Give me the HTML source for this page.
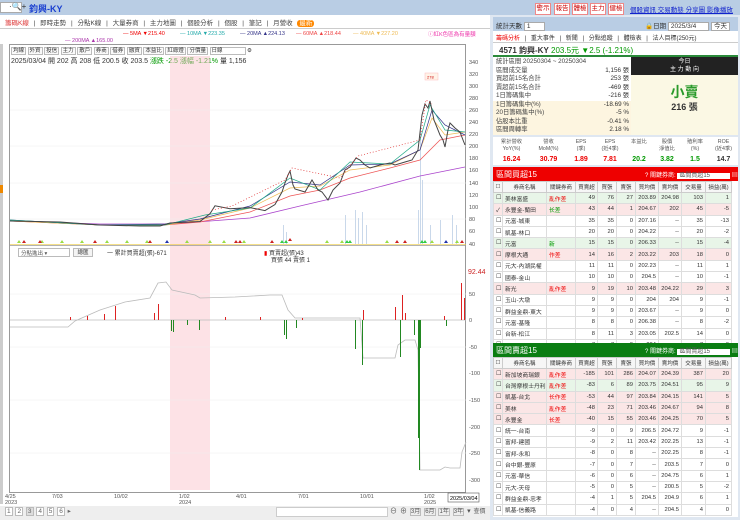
<!DOCTYPE html>
<html><head><meta charset="utf-8"><style>
*{box-sizing:border-box;margin:0;padding:0}
body{width:740px;height:520px;overflow:hidden;background:#fff;font-family:"Liberation Sans","Noto Sans CJK TC",sans-serif;font-size:7px;color:#333;position:relative}
.a{position:absolute;white-space:nowrap}
.btn{position:absolute;border:1px solid #bbb;background:#f4f4f4;font-size:6.5px;line-height:10px;text-align:center}
table{border-collapse:collapse;font-size:5.8px;table-layout:fixed}
td{border:1px solid #ddd;padding:0 2px;height:11.3px;text-align:right;white-space:nowrap;overflow:hidden}
th{border:1px solid #ccc;font-weight:normal;height:11px;background:#f6f6f6;white-space:nowrap;overflow:hidden;font-size:5.5px}
.pk td{background:#fbe6e6}.gn td{background:#e8f5e8}
.r{color:#e00}.g{color:#090}
.tb{border:1px solid #bbb;padding:0 1px;background:#fafafa}
</style></head><body>
<div class="a" style="left:0;top:0;width:740px;height:15px;background:#b9cde4"></div>
<div class="a" style="left:0;top:2px;width:22px;height:11px;background:#fff;border:1px solid #aaa"></div>
<div class="a" style="left:9px;top:2px;font-size:8px">·🔍+</div>
<div class="a" style="left:29px;top:2px;font-size:9px;font-weight:bold;color:#1a3fd0">鈞興-KY</div>
<div class="btn" style="left:535px;top:3px;width:16px;border-color:#e88;background:#fff;color:#c00">警示</div>
<div class="btn" style="left:554px;top:3px;width:16px;border-color:#e88;background:#fff;color:#c00">報告</div>
<div class="btn" style="left:572px;top:3px;width:16px;border-color:#e88;background:#fff;color:#c00">體檢</div>
<div class="btn" style="left:590px;top:3px;width:16px;border-color:#e88;background:#fff;color:#c00">主力</div>
<div class="btn" style="left:608px;top:3px;width:16px;border-color:#e88;background:#fff;color:#c00">健檢</div>
<div class="a" style="left:630px;top:4px;color:#12c;text-decoration:underline;font-size:6.5px">個股資訊 交易動態 分享圖 影像播放</div>
<div class="a" style="left:0;top:15px;width:490px;height:14px;background:#fff;border-bottom:1px solid #ccc"></div>
<div class="a" style="left:5px;top:17px;font-size:6.5px;color:#444;word-spacing:3px"><span style="color:#d33">籌碼K線</span> | 即時走勢 | 分點K線 | 大量券商 | 主力地圖 | 個股分析 | 個股 | 筆記 | 月營收 <span style="background:#f80;color:#fff;border-radius:3px;padding:0 2px">最新</span></div>
<div class="a" style="left:123px;top:31px;font-size:5.5px" ><span class="r">— 5MA ▼215.40</span></div>
<div class="a" style="left:180px;top:31px;font-size:5.5px;color:#2aa">— 10MA ▼223.35</div>
<div class="a" style="left:240px;top:31px;font-size:5.5px;color:#338">— 20MA ▲224.13</div>
<div class="a" style="left:296px;top:31px;font-size:5.5px;color:#e44">— 60MA ▲218.44</div>
<div class="a" style="left:353px;top:31px;font-size:5.5px;color:#eb5">— 40MA ▼227.20</div>
<div class="a" style="left:65px;top:38px;font-size:5.5px;color:#a3a">— 200MA ▲165.00</div>
<div class="a" style="left:428px;top:30px;font-size:5.5px;color:#e3a">ⓘ紅K色區為有量額</div>
<div class="a" style="left:9px;top:44px;width:457px;height:449px;border:1px solid #999"></div>
<div class="a" style="left:0;top:44px;width:3px;height:460px;background:#ccc"></div>
<div class="a" style="left:0;top:185px;width:3px;height:8px;background:#e80"></div>
<div class="a" style="left:11px;top:46px;font-size:5.5px;word-spacing:0">
<span class="tb">均線</span> <span class="tb">外資</span> <span class="tb">投信</span> <span class="tb">主力</span> <span class="tb">散戶</span> <span class="tb">券商</span> <span class="tb">借券</span> <span class="tb">融資</span> <span class="tb">本益比</span> <span class="tb">紅綠燈</span> <span class="tb">分價量</span> <span class="tb" style="padding-right:22px;background:#fff">日線</span> ⚙</div>
<div class="a" style="left:11px;top:56px;font-size:7px">2025/03/04 開 202 高 208 低 200.5 收 203.5 <span class="g">漲跌 -2.5 漲幅 -1.21%</span> 量 1,156</div>
<div class="a" style="left:170px;top:56px;width:40px;height:434px;background:rgba(250,190,200,.45)"></div>
<svg class="a" style="left:0;top:0" width="490" height="520">
<g stroke="#eee" stroke-width="0.5">
<line x1="10" y1="110" x2="466" y2="110"/><line x1="10" y1="146" x2="466" y2="146"/><line x1="10" y1="183" x2="466" y2="183"/><line x1="10" y1="219" x2="466" y2="219"/>
<line x1="10" y1="294" x2="466" y2="294"/><line x1="10" y1="347" x2="466" y2="347"/><line x1="10" y1="400" x2="466" y2="400"/><line x1="10" y1="453" x2="466" y2="453"/></g>
<g fill="#c9d8ea">
<rect x="283" y="225" width="1" height="19"/><rect x="286" y="232" width="1" height="12"/><rect x="345" y="215" width="1" height="29"/><rect x="355" y="210" width="1" height="34"/><rect x="358" y="218" width="1" height="26"/><rect x="362" y="212" width="1" height="32"/><rect x="366" y="225" width="1" height="19"/><rect x="418" y="210" width="1" height="34"/><rect x="420" y="128" width="1" height="116"/><rect x="422" y="180" width="1" height="64"/><rect x="430" y="225" width="1" height="19"/><rect x="440" y="220" width="1" height="24"/><rect x="452" y="215" width="1" height="29"/><rect x="456" y="225" width="1" height="19"/></g>
<polyline fill="none" stroke="#a4c" stroke-width="0.8" points="10,221 100,224 170,224 250,218 300,206 360,192 420,176 465,167"/>
<polyline fill="none" stroke="#e55" stroke-width="0.7" points="10,221 100,225 165,225 200,222 250,212 290,196 320,190 350,178 390,168 420,160 440,140 465,135"/>
<polyline fill="none" stroke="#eb5" stroke-width="0.7" points="10,221 100,225 165,225 200,220 250,208 290,188 320,186 350,170 390,165 420,150 432,118 445,135 465,132"/>
<polyline fill="none" stroke="#338" stroke-width="0.7" points="10,220 100,225 165,224 200,219 250,206 290,182 320,185 350,165 390,164 420,150 432,110 445,125 455,130 465,135"/>
<polyline fill="none" stroke="#2a8" stroke-width="0.7" points="10,220 100,225 165,225 205,215 250,208 290,178 320,190 350,162 390,164 420,140 430,105 445,130 465,132"/>
<polyline fill="none" stroke="#444" stroke-width="1" points="10,221 60,222 100,225 140,226 160,226 170,223 200,221.5 210,213.6 215,205.8 230,208.8 250,207.6 265,210.6 275,204.5 282,192 285,183 288,175 290,171 293,185 295,189 305,192 312,180 318,190 322,192 328,200 333,190 340,183 345,170 350,167 356,158 360,160 365,165 370,168 380,165 390,163 395,165 405,162 412,160 418,150 422,115 425,104 428,108 430,101 434,120 440,135 443,140 445,147 448,130 450,123 455,128 460,132 463,140 465,145"/>
<polyline fill="none" stroke="#d22" stroke-width="0.7" stroke-dasharray="1 2" points="212,210 232,206 285,180 292,168 340,178 358,156 420,140 426,100 432,104"/>
<g font-size="4" fill="#c00"><rect x="425" y="73" width="13" height="7" fill="#fff3e8" stroke="#fbb" stroke-width="0.5"/><text x="427" y="78.5">278</text></g>
<g fill="#9d4"><path d="M17,243l2,-3l2,3zM40,243l2,-3l2,3zM60,243l2,-3l2,3zM80,243l2,-3l2,3zM105,243l2,-3l2,3zM125,243l2,-3l2,3zM145,243l2,-3l2,3zM185,243l2,-3l2,3zM208,243l2,-3l2,3zM222,243l2,-3l2,3zM242,243l2,-3l2,3zM325,243l2,-3l2,3zM340,243l2,-3l2,3zM385,243l2,-3l2,3zM430,243l2,-3l2,3zM455,243l2,-3l2,3z"/></g>
<g fill="#c22"><path d="M22,243l2,-3l2,3zM38,243l2,-3l2,3zM93,243l2,-3l2,3zM148,243l2,-3l2,3zM234,243l2,-3l2,3zM238,243l2,-3l2,3zM270,243l2,-3l2,3zM288,241l2,-3l2,3zM395,243l2,-3l2,3zM403,243l2,-3l2,3zM460,243l2,-3l2,3z"/></g>
<g fill="#3c4"><path d="M280,243l2,-3l2,3zM284,243l2,-3l2,3zM345,243l2,-3l2,3zM348,243l2,-3l2,3zM420,243l2,-3l2,3zM423,243l2,-3l2,3z"/></g>
<g fill="#23a"><path d="M165,243l2,-3l2,3zM444,243l2,-3l2,3z"/></g>
<line x1="10" y1="245.5" x2="466" y2="245.5" stroke="#999" stroke-width="0.7"/>
<line x1="10" y1="244.3" x2="466" y2="244.3" stroke="#ec4" stroke-width="0.6"/>
<line x1="10" y1="320" x2="466" y2="320" stroke="#bbb" stroke-width="0.7"/>
<polyline fill="none" stroke="#bbb" stroke-width="0.8" points="10,327 68,327 75,321 100,310 125,302 150,298 158,283 166,282 172,290 195,295 200,298 235,297 270,295 282,295 288,310 295,318 360,318 363,358 395,358 398,345 405,340 415,340 418,350 420,470 440,470 445,467 450,468 460,468 462,452 466,442"/>
<g fill="#d22"><rect x="70" y="317" width="1" height="3"/><rect x="87" y="316" width="1" height="4"/><rect x="104" y="314" width="1" height="6"/><rect x="115" y="306" width="1" height="14"/><rect x="158" y="304" width="1" height="16"/><rect x="154" y="313" width="1" height="7"/><rect x="225" y="317" width="1" height="3"/><rect x="260" y="317" width="1" height="3"/><rect x="302" y="318" width="1" height="2"/><rect x="363" y="310" width="1" height="10"/><rect x="395" y="307" width="1" height="13"/><rect x="402" y="295" width="1" height="25"/><rect x="405" y="313" width="1" height="7"/><rect x="444" y="316" width="1" height="4"/><rect x="461" y="283" width="1" height="37"/><rect x="464" y="298" width="1" height="22"/></g>
<g fill="#282"><rect x="171" y="320" width="1" height="11"/><rect x="173" y="320" width="1" height="12"/><rect x="187" y="320" width="1" height="5"/><rect x="199" y="320" width="1" height="10"/><rect x="284" y="320" width="1" height="15"/><rect x="286" y="320" width="1" height="19"/><rect x="296" y="320" width="1" height="8"/><rect x="355" y="320" width="1" height="29"/><rect x="362" y="320" width="1" height="45"/><rect x="400" y="320" width="1" height="37"/><rect x="414" y="320" width="1" height="15"/><rect x="418" y="320" width="1" height="118"/><rect x="419" y="320" width="1" height="150"/><rect x="420" y="320" width="1" height="28"/><rect x="446" y="320" width="1" height="6"/></g>
<g font-size="5.5" fill="#555">
<text x="469" y="64">340</text><text x="469" y="76">320</text><text x="469" y="88">300</text><text x="469" y="100">280</text><text x="469" y="112">260</text><text x="469" y="124">240</text><text x="469" y="136">220</text><text x="469" y="148">200</text><text x="469" y="160">180</text><text x="469" y="172">160</text><text x="469" y="185">140</text><text x="469" y="197">120</text><text x="469" y="209">100</text><text x="469" y="221">80</text><text x="469" y="233">60</text><text x="469" y="246">40</text>
<text x="469" y="296">50</text><text x="469" y="322">0</text><text x="469" y="349">-50</text><text x="469" y="375">-100</text><text x="469" y="402">-150</text><text x="469" y="429">-200</text><text x="469" y="455">-250</text><text x="469" y="482">-300</text>
<text x="5" y="498">4/25</text><text x="5" y="504">2023</text><text x="52" y="498">7/03</text><text x="114" y="498">10/02</text><text x="179" y="498">1/02</text><text x="179" y="504">2024</text><text x="236" y="498">4/01</text><text x="298" y="498">7/01</text><text x="360" y="498">10/01</text><text x="424" y="498">1/02</text><text x="424" y="504">2025</text></g>
<text x="468" y="274" font-size="7" fill="#c22">92.44</text>
<rect x="448" y="493" width="31" height="9" fill="#fff" stroke="#555" stroke-width="0.6"/><text x="450" y="500" font-size="5.5">2025/03/04</text>
</svg>
<div class="a" style="left:18px;top:248px;width:52px;height:9px;border:1px solid #bbb;font-size:5.5px;padding-left:2px;color:#555">分點進出 ▾</div>
<div class="btn" style="left:73px;top:248px;width:20px;height:9px;line-height:8px;font-size:5.5px">總匯</div>
<div class="a" style="left:107px;top:248px;font-size:6px">一 累計買賣超(張)-671</div>
<div class="a" style="left:264px;top:248px;font-size:6px"><span class="r">▮</span> 買賣超(張)43</div>
<div class="a" style="left:271px;top:255px;font-size:6px">買張 44 賣張 1</div>
<div class="a" style="left:0;top:506px;width:490px;height:14px;background:#eee"></div>
<div class="a" style="left:5px;top:507px;font-size:6.5px;color:#666;word-spacing:1px">
<span style="border:1px solid #bbb;background:#fff;padding:0 1px">1</span> <span style="border:1px solid #bbb;background:#fff;padding:0 1px">2</span> <span style="border:1px solid #bbb;background:#ddd;padding:0 1px">3</span> <span style="border:1px solid #bbb;background:#fff;padding:0 1px">4</span> <span style="border:1px solid #bbb;background:#fff;padding:0 1px">5</span> <span style="border:1px solid #bbb;background:#fff;padding:0 1px">6</span> ▸</div>
<div class="a" style="left:276px;top:507px;width:112px;height:10px;background:#fff;border:1px solid #ccc"></div>
<div class="a" style="left:390px;top:506px;font-size:7px;color:#555;word-spacing:1px">⊖ ⊕ <span style="border:1px solid #bbb;font-size:6px">3月</span> <span style="border:1px solid #bbb;font-size:6px">6月</span> <span style="border:1px solid #bbb;font-size:6px">1年</span> <span style="border:1px solid #bbb;font-size:6px">3年</span> ▾ <span style="font-size:6px">查價</span></div>

<div class="a" style="left:490px;top:15px;width:250px;height:505px;background:#dfe7f1"></div>
<div class="a" style="left:493px;top:17px;width:245px;height:14px;background:#b9cde4"></div>
<div class="a" style="left:496px;top:20px;font-size:6.5px">統計天數 <span style="background:#fff;border:1px solid #aaa;padding:0 14px 0 2px">1</span></div>
<div class="a" style="left:645px;top:20px;font-size:6.5px">🔒日期 <span style="background:#fff;border:1px solid #aaa;padding:0 12px 0 2px">2025/3/4</span> <span style="background:#fff;border:1px solid #aaa;padding:0 2px">今天</span></div>
<div class="a" style="left:493px;top:31px;width:245px;height:12px;background:#fff;border-bottom:1px solid #ccc;font-size:6px;padding:2px 3px;word-spacing:3px"><span class="r">籌碼分析</span> | 重大事件 | 新聞 | 分點追蹤 | 體檢表 | 法人目標(250元)</div>
<div class="a" style="left:493px;top:43px;width:245px;height:14px;background:#fff;border-bottom:2px solid #2a8a3a;font-size:8px;padding:2px 6px"><b>4571 鈞興-KY</b> <span class="g">203.5元 ▼2.5 (-1.21%)</span></div>
<div class="a" style="left:493px;top:57px;width:138px;height:78px;background:#fff"></div>
<div class="a" style="left:493px;top:101px;width:138px;height:34px;background:#fdf5e0"></div>
<div class="a" style="left:496px;top:58px;font-size:6.3px;line-height:8.5px;color:#444">統計區間 20250304 ~ 20250304<br>區間成交量<br>買超前15名合計<br>賣超前15名合計<br>1日籌碼集中<br>1日籌碼集中(%)<br>20日籌碼集中(%)<br>佔股本比重<br>區間周轉率</div>
<div class="a" style="left:590px;top:66.5px;font-size:6.3px;line-height:8.5px;text-align:right;width:39px;color:#333">1,156 張<br>253 張<br>-469 張<br>-216 張<br>-18.69 %<br>-5 %<br>-0.41 %<br>2.18 %</div>
<div class="a" style="left:631px;top:57px;width:107px;height:18px;background:#222;color:#fff;font-size:6px;text-align:center;line-height:8px;padding-top:1px">今日<br>主 力 動 向</div>
<div class="a" style="left:631px;top:75px;width:107px;height:60px;background:#fbf8e4"></div>
<div class="a" style="left:631px;top:82px;width:107px;text-align:center;font-size:14px;color:#2a9a2a;font-weight:bold">小賣</div>
<div class="a" style="left:631px;top:100px;width:107px;text-align:center;font-size:9px;font-weight:bold">216 張</div>
<div class="a" style="left:493px;top:137px;width:245px;height:28px;background:#fff"></div>
<div class="a" style="left:493px;top:139px;width:245px;font-size:5.3px;color:#555;display:flex;text-align:center;line-height:7px">
<div style="width:37px">累計營收<br>YoY(%)</div><div style="width:37px">營收<br>MoM(%)</div><div style="width:28px">EPS<br>(季)</div><div style="width:30px">EPS<br>(近4季)</div><div style="width:28px">本益比</div><div style="width:28px">股價<br>淨值比</div><div style="width:28px">殖利率<br>(%)</div><div style="width:29px">ROE<br>(近4季)</div></div>
<div class="a" style="left:493px;top:156px;width:245px;font-size:7px;font-weight:bold;display:flex;text-align:center">
<div style="width:37px" class="r">16.24</div><div style="width:37px" class="r">30.79</div><div style="width:28px" class="r">1.89</div><div style="width:30px" class="r">7.81</div><div style="width:28px" class="g">20.2</div><div style="width:28px" class="g">3.82</div><div style="width:28px" class="g">1.5</div><div style="width:29px">14.7</div></div>
<div class="a" style="left:493px;top:167px;width:245px;height:14px;background:#e00;color:#fff;font-size:8px;padding:2px 3px">區間買超15<span style="position:absolute;left:152px;top:3px;font-size:6px">? 關鍵券商: <span style="background:#fff;color:#555;padding:0 20px 0 2px">區間買超15</span> ▤</span></div>
<div class="a" style="left:493px;top:181px;width:245px;height:162px;background:#fff;overflow:hidden">
<table style="width:238px">
<colgroup><col style="width:9px"><col style="width:44px"><col style="width:29px"><col style="width:22px"><col style="width:19px"><col style="width:19px"><col style="width:23px"><col style="width:23px"><col style="width:24px"><col style="width:26px"></colgroup>
<tr><th>☐</th><th>券商名稱</th><th>關鍵券商</th><th>買賣超</th><th>買張</th><th>賣張</th><th>買均價</th><th>賣均價</th><th>交易量</th><th>損益(萬)</th></tr>
<tr class="gn"><td>☐</td><td style="text-align:left">美林富盛</td><td style="text-align:left" class="r">亂作差</td><td>49</td><td>76</td><td>27</td><td>203.89</td><td>204.98</td><td>103</td><td>1</td></tr>
<tr class="pk"><td>✓</td><td style="text-align:left">永豐金-蘭田</td><td style="text-align:left" class="g">长差</td><td>43</td><td>44</td><td>1</td><td>204.67</td><td>202</td><td>45</td><td>-5</td></tr>
<tr><td>☐</td><td style="text-align:left">元富-城東</td><td></td><td>35</td><td>35</td><td>0</td><td>207.16</td><td>--</td><td>35</td><td>-13</td></tr>
<tr><td>☐</td><td style="text-align:left">凱基-林口</td><td></td><td>20</td><td>20</td><td>0</td><td>204.22</td><td>--</td><td>20</td><td>-2</td></tr>
<tr class="gn"><td>☐</td><td style="text-align:left">元富</td><td style="text-align:left" class="g">新</td><td>15</td><td>15</td><td>0</td><td>206.33</td><td>--</td><td>15</td><td>-4</td></tr>
<tr class="pk"><td>☐</td><td style="text-align:left">摩根大通</td><td style="text-align:left" class="r">作差</td><td>14</td><td>16</td><td>2</td><td>203.22</td><td>203</td><td>18</td><td>0</td></tr>
<tr><td>☐</td><td style="text-align:left">元大-內湖民權</td><td></td><td>11</td><td>11</td><td>0</td><td>202.23</td><td>--</td><td>11</td><td>1</td></tr>
<tr><td>☐</td><td style="text-align:left">國泰-金山</td><td></td><td>10</td><td>10</td><td>0</td><td>204.5</td><td>--</td><td>10</td><td>-1</td></tr>
<tr class="pk"><td>☐</td><td style="text-align:left">新光</td><td style="text-align:left" class="r">亂作差</td><td>9</td><td>19</td><td>10</td><td>203.48</td><td>204.22</td><td>29</td><td>3</td></tr>
<tr><td>☐</td><td style="text-align:left">玉山-大墩</td><td></td><td>9</td><td>9</td><td>0</td><td>204</td><td>204</td><td>9</td><td>-1</td></tr>
<tr><td>☐</td><td style="text-align:left">群益金鼎-東大</td><td></td><td>9</td><td>9</td><td>0</td><td>203.67</td><td>--</td><td>9</td><td>0</td></tr>
<tr><td>☐</td><td style="text-align:left">元富-基隆</td><td></td><td>8</td><td>8</td><td>0</td><td>206.38</td><td>--</td><td>8</td><td>-2</td></tr>
<tr><td>☐</td><td style="text-align:left">台新-松江</td><td></td><td>8</td><td>11</td><td>3</td><td>203.05</td><td>202.5</td><td>14</td><td>0</td></tr>
<tr><td>☐</td><td style="text-align:left">兆豐-大安</td><td></td><td>7</td><td>7</td><td>0</td><td>204</td><td>--</td><td>7</td><td>0</td></tr>
</table></div>
<div class="a" style="left:493px;top:343px;width:245px;height:14px;background:#0a7d12;color:#fff;font-size:8px;padding:2px 3px">區間賣超15<span style="position:absolute;left:152px;top:3px;font-size:6px">? 關鍵券商: <span style="background:#fff;color:#555;padding:0 20px 0 2px">區間賣超15</span> ▤</span></div>
<div class="a" style="left:493px;top:357px;width:245px;height:160px;background:#fff;overflow:hidden">
<table style="width:238px">
<colgroup><col style="width:9px"><col style="width:44px"><col style="width:29px"><col style="width:22px"><col style="width:19px"><col style="width:19px"><col style="width:23px"><col style="width:23px"><col style="width:24px"><col style="width:26px"></colgroup>
<tr><th>☐</th><th>券商名稱</th><th>關鍵券商</th><th>買賣超</th><th>買張</th><th>賣張</th><th>買均價</th><th>賣均價</th><th>交易量</th><th>損益(萬)</th></tr>
<tr class="pk"><td>☐</td><td style="text-align:left">新加坡商瑞銀</td><td style="text-align:left" class="r">亂作差</td><td>-185</td><td>101</td><td>286</td><td>204.07</td><td>204.39</td><td>387</td><td>20</td></tr>
<tr class="gn"><td>☐</td><td style="text-align:left">台灣摩根士丹利</td><td style="text-align:left" class="r">亂作差</td><td>-83</td><td>6</td><td>89</td><td>203.75</td><td>204.51</td><td>95</td><td>9</td></tr>
<tr class="pk"><td>☐</td><td style="text-align:left">凱基-台北</td><td style="text-align:left" class="r">长作差</td><td>-53</td><td>44</td><td>97</td><td>203.84</td><td>204.15</td><td>141</td><td>5</td></tr>
<tr class="pk"><td>☐</td><td style="text-align:left">美林</td><td style="text-align:left" class="r">亂作差</td><td>-48</td><td>23</td><td>71</td><td>203.46</td><td>204.67</td><td>94</td><td>8</td></tr>
<tr class="pk"><td>☐</td><td style="text-align:left">永豐金</td><td style="text-align:left" class="r">长差</td><td>-40</td><td>15</td><td>55</td><td>203.46</td><td>204.25</td><td>70</td><td>5</td></tr>
<tr><td>☐</td><td style="text-align:left">統一-台南</td><td></td><td>-9</td><td>0</td><td>9</td><td>206.5</td><td>204.72</td><td>9</td><td>-1</td></tr>
<tr><td>☐</td><td style="text-align:left">富邦-建國</td><td></td><td>-9</td><td>2</td><td>11</td><td>203.42</td><td>202.25</td><td>13</td><td>-1</td></tr>
<tr><td>☐</td><td style="text-align:left">富邦-永和</td><td></td><td>-8</td><td>0</td><td>8</td><td>--</td><td>202.25</td><td>8</td><td>-1</td></tr>
<tr><td>☐</td><td style="text-align:left">台中銀-豐原</td><td></td><td>-7</td><td>0</td><td>7</td><td>--</td><td>203.5</td><td>7</td><td>0</td></tr>
<tr><td>☐</td><td style="text-align:left">元富-華信</td><td></td><td>-6</td><td>0</td><td>6</td><td>--</td><td>204.75</td><td>6</td><td>1</td></tr>
<tr><td>☐</td><td style="text-align:left">元大-天母</td><td></td><td>-5</td><td>0</td><td>5</td><td>--</td><td>200.5</td><td>5</td><td>-2</td></tr>
<tr><td>☐</td><td style="text-align:left">群益金鼎-忠孝</td><td></td><td>-4</td><td>1</td><td>5</td><td>204.5</td><td>204.9</td><td>6</td><td>1</td></tr>
<tr><td>☐</td><td style="text-align:left">凱基-信義路</td><td></td><td>-4</td><td>0</td><td>4</td><td>--</td><td>204.5</td><td>4</td><td>0</td></tr>
</table></div>
</body></html>
